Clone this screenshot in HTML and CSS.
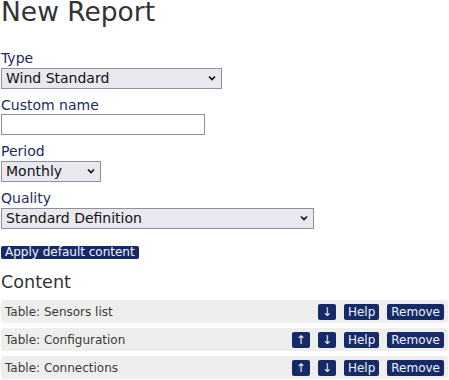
FILE: index.html
```html
<!DOCTYPE html>
<html lang="en">
<head>
<meta charset="utf-8">
<title>New Report</title>
<link rel="stylesheet" href="styles.css">
</head>
<body>
<h1 class="title">New Report</h1>

<div class="field">
  <label class="label" for="type">Type</label>
  <div class="select-wrap w-type">
    <select class="select" id="type"><option>Wind Standard</option></select>
    <svg class="chev" width="8" height="6" viewBox="0 0 8 6"><polyline points="1,1.5 4,4.5 7,1.5" fill="none" stroke="#111" stroke-width="1.7"/></svg>
  </div>
</div>

<div class="field">
  <label class="label" for="cname">Custom name</label>
  <input class="input" id="cname" type="text">
</div>

<div class="field">
  <label class="label" for="period">Period</label>
  <div class="select-wrap w-period">
    <select class="select" id="period"><option>Monthly</option></select>
    <svg class="chev" width="8" height="6" viewBox="0 0 8 6"><polyline points="1,1.5 4,4.5 7,1.5" fill="none" stroke="#111" stroke-width="1.7"/></svg>
  </div>
</div>

<div class="field">
  <label class="label" for="quality">Quality</label>
  <div class="select-wrap w-quality">
    <select class="select" id="quality"><option>Standard Definition</option></select>
    <svg class="chev" width="8" height="6" viewBox="0 0 8 6"><polyline points="1,1.5 4,4.5 7,1.5" fill="none" stroke="#111" stroke-width="1.7"/></svg>
  </div>
</div>

<button class="btn apply" type="button">Apply default content</button>

<h2 class="subtitle">Content</h2>

<div class="rows">
  <div class="row">
    <span class="row-name">Table: Sensors list</span>
    <div class="actions">
      <button class="btn" type="button">↓</button>
      <button class="btn" type="button">Help</button>
      <button class="btn" type="button">Remove</button>
    </div>
  </div>
  <div class="row">
    <span class="row-name">Table: Configuration</span>
    <div class="actions">
      <button class="btn" type="button">↑</button>
      <button class="btn" type="button">↓</button>
      <button class="btn" type="button">Help</button>
      <button class="btn" type="button">Remove</button>
    </div>
  </div>
  <div class="row">
    <span class="row-name">Table: Connections</span>
    <div class="actions">
      <button class="btn" type="button">↑</button>
      <button class="btn" type="button">↓</button>
      <button class="btn" type="button">Help</button>
      <button class="btn" type="button">Remove</button>
    </div>
  </div>
</div>
</body>
</html>
```

FILE: styles.css
```css
html, body {
  margin: 0;
  background: #ffffff;
}
body {
  padding: 0 1px;
  font-family: "DejaVu Sans", "Liberation Sans", sans-serif;
  color: #333333;
}
.title {
  margin: 0 0 27px 0;
  font-size: 26.5px;
  font-weight: normal;
  line-height: 23px;
  color: #333333;
}
.field {
  margin-bottom: 8.2px;
}
.label {
  display: block;
  font-size: 14px;
  line-height: 17px;
  margin-bottom: 0.5px;
  color: #1c2b63;
}
.select-wrap {
  position: relative;
  height: 21px;
}
.w-type { width: 221px; }
.w-period { width: 100px; }
.w-quality { width: 313px; }
.select {
  appearance: none;
  -webkit-appearance: none;
  display: block;
  box-sizing: border-box;
  width: 100%;
  height: 21px;
  margin: 0;
  padding: 0 20px 0 4px;
  border: 1px solid #8f8f9d;
  border-radius: 0;
  background: #e9e8ee;
  font-family: "DejaVu Sans", sans-serif;
  font-size: 14px;
  color: #111111;
}
.chev {
  position: absolute;
  right: 6px;
  top: 7px;
  pointer-events: none;
}
.input {
  display: block;
  box-sizing: border-box;
  width: 204px;
  height: 21px;
  margin: 0;
  padding: 0 4px;
  border: 1px solid #8f8f9d;
  border-radius: 0;
  background: #ffffff;
  font-family: "DejaVu Sans", sans-serif;
  font-size: 14px;
}
.btn {
  margin: 0;
  padding: 0 4px;
  border: none;
  border-radius: 2px;
  background: #162a68;
  color: #f4f4f8;
  font-family: "DejaVu Sans", sans-serif;
  font-size: 12px;
  line-height: 16px;
  height: 16px;
}
.apply {
  display: block;
  margin-top: 17.2px;
  height: 13.5px;
  line-height: 13.5px;
}
.subtitle {
  margin: 12.7px 0 7.8px 0;
  font-size: 17.6px;
  font-weight: normal;
  line-height: 20px;
  color: #333333;
}
.rows {
  display: flex;
  flex-direction: column;
  gap: 5px;
}
.row {
  display: flex;
  align-items: center;
  height: 23px;
  padding: 0 4px;
  border-radius: 4px;
  background: #eeefec;
}
.row-name {
  font-size: 12px;
  color: #3a3a3a;
  padding-top: 1px;
}
.actions {
  margin-left: auto;
  display: flex;
  gap: 8px;
  padding-top: 1px;
}
```
